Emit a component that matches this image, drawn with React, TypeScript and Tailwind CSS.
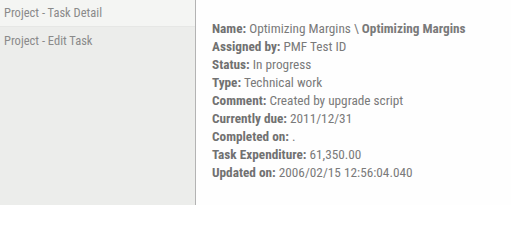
const rows: [string, React.ReactNode][] = [
  ["Name:", <>Optimizing Margins \ <span className="font-bold">Optimizing Margins</span></>],
  ["Assigned by:", "PMF Test ID"],
  ["Status:", "In progress"],
  ["Type:", "Technical work"],
  ["Comment:", "Created by upgrade script"],
  ["Currently due:", "2011/12/31"],
  ["Completed on:", "."],
  ["Task Expenditure:", "61,350.00"],
  ["Updated on:", "2006/02/15 12:56:04.040"],
];

export default function App() {
  return (
    <div className="flex h-[205px] w-[511px] font-['Roboto_Condensed','Liberation_Sans_Narrow',Roboto,sans-serif] font-stretch-condensed">
      <div className="w-[196px] shrink-0 border-r border-[#b3b3b3] bg-[#ecedeb]">
        <div className="h-[27px] border-b border-[#e6e7e5] bg-[#f4f5f3] px-1 pt-[4px] text-[12.5px] text-[#8a8a8a]">
          Project - Task Detail
        </div>
        <div className="h-[29px] px-1 pt-[5px] text-[12.5px] text-[#8a8a8a]">
          Project - Edit Task
        </div>
      </div>
      <div className="flex-1 bg-[#fefefe] pl-4 pt-5 text-[13.25px] leading-[18px] text-[#7a7a7a]">
        {rows.map(([label, value]) => (
          <div key={label}>
            <span className="font-bold text-[#717171]">{label}</span> {value}
          </div>
        ))}
      </div>
    </div>
  );
}
